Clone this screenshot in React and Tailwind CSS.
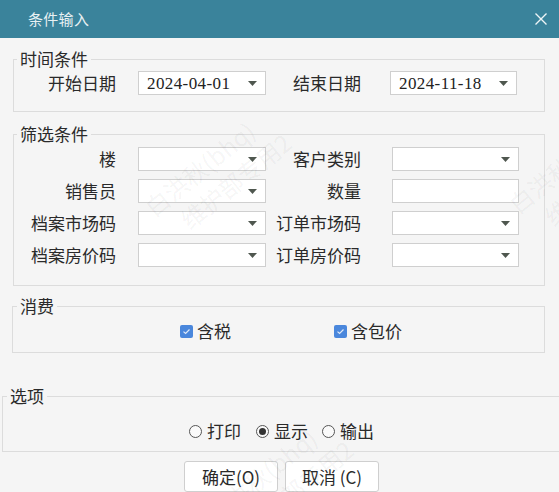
import React from "react";

const Arrow = () => (
  <svg width="9" height="5" viewBox="0 0 9 5" className="shrink-0">
    <polygon points="0,0 9,0 4.5,5" fill="#4f574f" />
  </svg>
);

const Select = ({ value, w = "w-[128px]", ml = "" }) => (
  <div
    className={`${w} ${ml} h-[24px] bg-white border border-[#cfcfcf] flex items-center justify-between pl-[8px] pr-[8px] shrink-0`}
  >
    <span className="font-['Liberation_Serif',serif] text-[17px] tracking-[0.4px] text-[#222] leading-none">
      {value}
    </span>
    <Arrow />
  </div>
);

const Input = ({ w = "w-[128px]", ml = "" }) => (
  <div className={`${w} ${ml} h-[24px] bg-white border border-[#cfcfcf] shrink-0`} />
);

const Label = ({ children, w }) => (
  <div className={`${w} text-right text-[17px] leading-[24px] text-[#2a2a2a] shrink-0`}>{children}</div>
);

const Check = () => (
  <div className="w-[13px] h-[13px] rounded-[2px] bg-[#4a87dc] flex items-center justify-center shrink-0">
    <svg width="9" height="7" viewBox="0 0 9 7">
      <path d="M1.5 3.6 L3.6 5.5 L7.5 1.5" stroke="#dfe9f8" strokeWidth="1.2" fill="none" />
    </svg>
  </div>
);

const Radio = ({ on }) => (
  <div className="w-[13px] h-[13px] rounded-full border border-[#555] bg-[#fafafa] flex items-center justify-center shrink-0">
    {on && <div className="w-[7px] h-[7px] rounded-full bg-[#333]" />}
  </div>
);

const Watermark = ({ className }) => (
  <div
    className={`absolute pointer-events-none select-none origin-top-left rotate-[-39deg] text-[24px] leading-[32px] text-[rgba(0,0,0,0.055)] whitespace-nowrap ${className}`}
  >
    <div>白洪秋(bhq)</div>
    <div className="pl-[20px]">维护部专用2</div>
  </div>
);

export default function App() {
  return (
    <div className="relative w-[559px] h-[492px] overflow-hidden bg-[#f5f5f5] font-['Noto_Sans_CJK_SC','Noto_Sans',sans-serif] text-[#2a2a2a]">
      {/* title bar */}
      <div className="h-[38px] bg-[#3a839b] flex items-center justify-between pl-[28px] pr-[12px]">
        <span className="text-[15px] text-[#e8f1f3] tracking-[0.3px]">条件输入</span>
        <svg width="12" height="12" viewBox="0 0 12 12">
          <path d="M0.5 0.5 L11.5 11.5 M11.5 0.5 L0.5 11.5" stroke="#eef5f7" strokeWidth="1.4" />
        </svg>
      </div>

      {/* 时间条件 */}
      <fieldset className="ml-[13px] mt-[11px] w-[532px] border border-[#dcdcdc] pb-[16px]">
        <legend className="ml-[3px] px-[3px] text-[17px] leading-[20px]">时间条件</legend>
        <div className="mt-[2px] flex items-center">
          <Label w="w-[102px]">开始日期</Label>
          <Select value="2024-04-01" ml="ml-[22px]" />
          <Label w="w-[95px]">结束日期</Label>
          <Select value="2024-11-18" w="w-[127px]" ml="ml-[29px]" />
        </div>
      </fieldset>

      {/* 筛选条件 */}
      <fieldset className="ml-[13px] mt-[12px] w-[532px] border border-[#dcdcdc] pt-[3px] pb-[18px]">
        <legend className="ml-[3px] px-[3px] text-[17px] leading-[20px]">筛选条件</legend>
        <div className="flex flex-col gap-[8px]">
          <div className="flex items-center">
            <Label w="w-[102px]">楼</Label>
            <Select value="" ml="ml-[22px]" />
            <Label w="w-[95px]">客户类别</Label>
            <Select value="" w="w-[127px]" ml="ml-[31px]" />
          </div>
          <div className="flex items-center">
            <Label w="w-[102px]">销售员</Label>
            <Select value="" ml="ml-[22px]" />
            <Label w="w-[95px]">数量</Label>
            <Input w="w-[127px]" ml="ml-[31px]" />
          </div>
          <div className="flex items-center">
            <Label w="w-[102px]">档案市场码</Label>
            <Select value="" ml="ml-[22px]" />
            <Label w="w-[95px]">订单市场码</Label>
            <Select value="" w="w-[127px]" ml="ml-[31px]" />
          </div>
          <div className="flex items-center">
            <Label w="w-[102px]">档案房价码</Label>
            <Select value="" ml="ml-[22px]" />
            <Label w="w-[95px]">订单房价码</Label>
            <Select value="" w="w-[127px]" ml="ml-[31px]" />
          </div>
        </div>
      </fieldset>

      {/* 消费 */}
      <fieldset className="ml-[12px] mt-[10px] w-[533px] border border-[#dcdcdc] pt-[5px] pb-[11px]">
        <legend className="ml-[4px] px-[3px] text-[17px] leading-[20px]">消费</legend>
        <div className="h-[20px] flex items-center pl-[167px]">
          <Check />
          <span className="ml-[4px] text-[17px] leading-[20px]">含税</span>
          <div className="ml-[103px]">
            <Check />
          </div>
          <span className="ml-[4px] text-[17px] leading-[20px]">含包价</span>
        </div>
      </fieldset>

      {/* 选项 */}
      <fieldset className="ml-[2px] mt-[33px] w-[600px] border border-[#dcdcdc] pt-[15px] pb-[10px]">
        <legend className="ml-[4px] px-[3px] text-[17px] leading-[20px]">选项</legend>
        <div className="h-[20px] flex items-center pl-[186px]">
          <Radio />
          <span className="ml-[5px] text-[17px] leading-[20px]">打印</span>
          <div className="ml-[15px]">
            <Radio on />
          </div>
          <span className="ml-[5px] text-[17px] leading-[20px]">显示</span>
          <div className="ml-[14px]">
            <Radio />
          </div>
          <span className="ml-[5px] text-[17px] leading-[20px]">输出</span>
        </div>
      </fieldset>

      {/* buttons */}
      <div className="mt-[9px] flex pl-[184px] gap-[7px]">
        <button className="w-[94px] h-[31px] bg-white border border-[#cfcfcf] rounded-[3px] text-[17px] leading-none text-[#2a2a2a]">
          确定(O)
        </button>
        <button className="w-[94px] h-[31px] bg-white border border-[#cfcfcf] rounded-[3px] text-[17px] leading-none text-[#2a2a2a]">
          取消 (C)
        </button>
      </div>

      <Watermark className="left-[138px] top-[198px]" />
      <Watermark className="left-[502px] top-[195px]" />
      <Watermark className="left-[200px] top-[505px]" />
    </div>
  );
}
